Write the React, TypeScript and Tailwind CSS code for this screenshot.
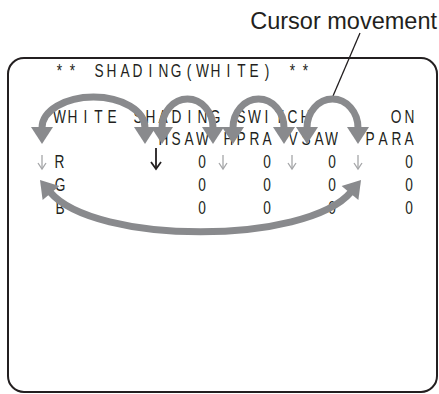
const rows = [
  "** SHADING(WHITE) **        ",
  "                            ",
  "WHITE SHADING SWITCH      ON",
  "        HSAW HPRA VSAW  PARA",
  "R          0    0    0     0",
  "G          0    0    0     0",
  "B          0    0    0     0",
];

const GRAY = "#898a8d";

// triangle arrowhead: base centre (bx, by), pointing along (dx, dy)
const head = (bx: number, by: number, dx: number, dy: number, len = 17, half = 11) => {
  const n = Math.hypot(dx, dy);
  const ux = dx / n;
  const uy = dy / n;
  const tx = bx + ux * len;
  const ty = by + uy * len;
  return `${bx - uy * half},${by + ux * half} ${tx},${ty} ${bx + uy * half},${by - ux * half}`;
};

const hops = [
  { x1: 42, x2: 145, ry: 31 },
  { x1: 162, x2: 213, ry: 29 },
  { x1: 233, x2: 284, ry: 29 },
  { x1: 307, x2: 358, ry: 29 },
];

const thin = [42, 223, 292, 358];

const Arrows = () => (
  <svg className="absolute inset-0 pointer-events-none" width={439} height={394} viewBox="0 0 439 394">
    <line x1={360} y1={33} x2={333} y2={96} stroke="#231f20" strokeWidth={1.3} />
    {hops.map((h) => (
      <g key={h.x1}>
        <path
          d={`M ${h.x1} 128 A ${(h.x2 - h.x1) / 2} ${h.ry} 0 0 1 ${h.x2} 128`}
          fill="none"
          stroke={GRAY}
          strokeWidth={7}
        />
        <polygon points={head(h.x1, 127, 0, 1)} fill={GRAY} />
        <polygon points={head(h.x2, 127, 0, 1)} fill={GRAY} />
      </g>
    ))}
    <path d="M 50 192 C 95 245, 306 245, 351 192" fill="none" stroke={GRAY} strokeWidth={7} />
    <polygon points={head(51, 193, -45, -53)} fill={GRAY} />
    <polygon points={head(350, 193, 45, -53)} fill={GRAY} />
    {thin.map((x) => (
      <g key={x} stroke="#a5a6a8" strokeWidth={1.3} fill="none">
        <line x1={x} y1={155} x2={x} y2={169} />
        <polyline points={`${x - 4},${163} ${x},${169} ${x + 4},${163}`} />
      </g>
    ))}
    <g stroke="#231f20" strokeWidth={1.8} fill="none">
      <line x1={156} y1={148} x2={156} y2={169} />
      <polyline points="151,162 156,169 161,162" />
    </g>
  </svg>
);

export default function App() {
  return (
    <div className="relative w-[439px] h-[394px] bg-white overflow-hidden font-['Liberation_Sans',Arial,sans-serif] text-[#231f20]">
      <div className="h-[57px] pt-[8px] pr-[2px] flex justify-end">
        <span className="text-[23.5px] leading-[26px]">Cursor movement</span>
      </div>
      <div className="ml-[7px] w-[431px] h-[336px] border-2 border-[#231f20] rounded-[17px] pl-[44.5px] pt-[1px]">
        <div className="grid grid-cols-[repeat(28,12.95px)] auto-rows-[22.8px] text-[18px] leading-[22.8px]">
          {rows.map((row, r) =>
            row.split("").map((ch, c) => (
              <span key={`${r}-${c}`} className="flex justify-center">
                <span className="inline-block scale-x-[0.76]">{ch === " " ? "\u00a0" : ch}</span>
              </span>
            ))
          )}
        </div>
      </div>
      <Arrows />
    </div>
  );
}
